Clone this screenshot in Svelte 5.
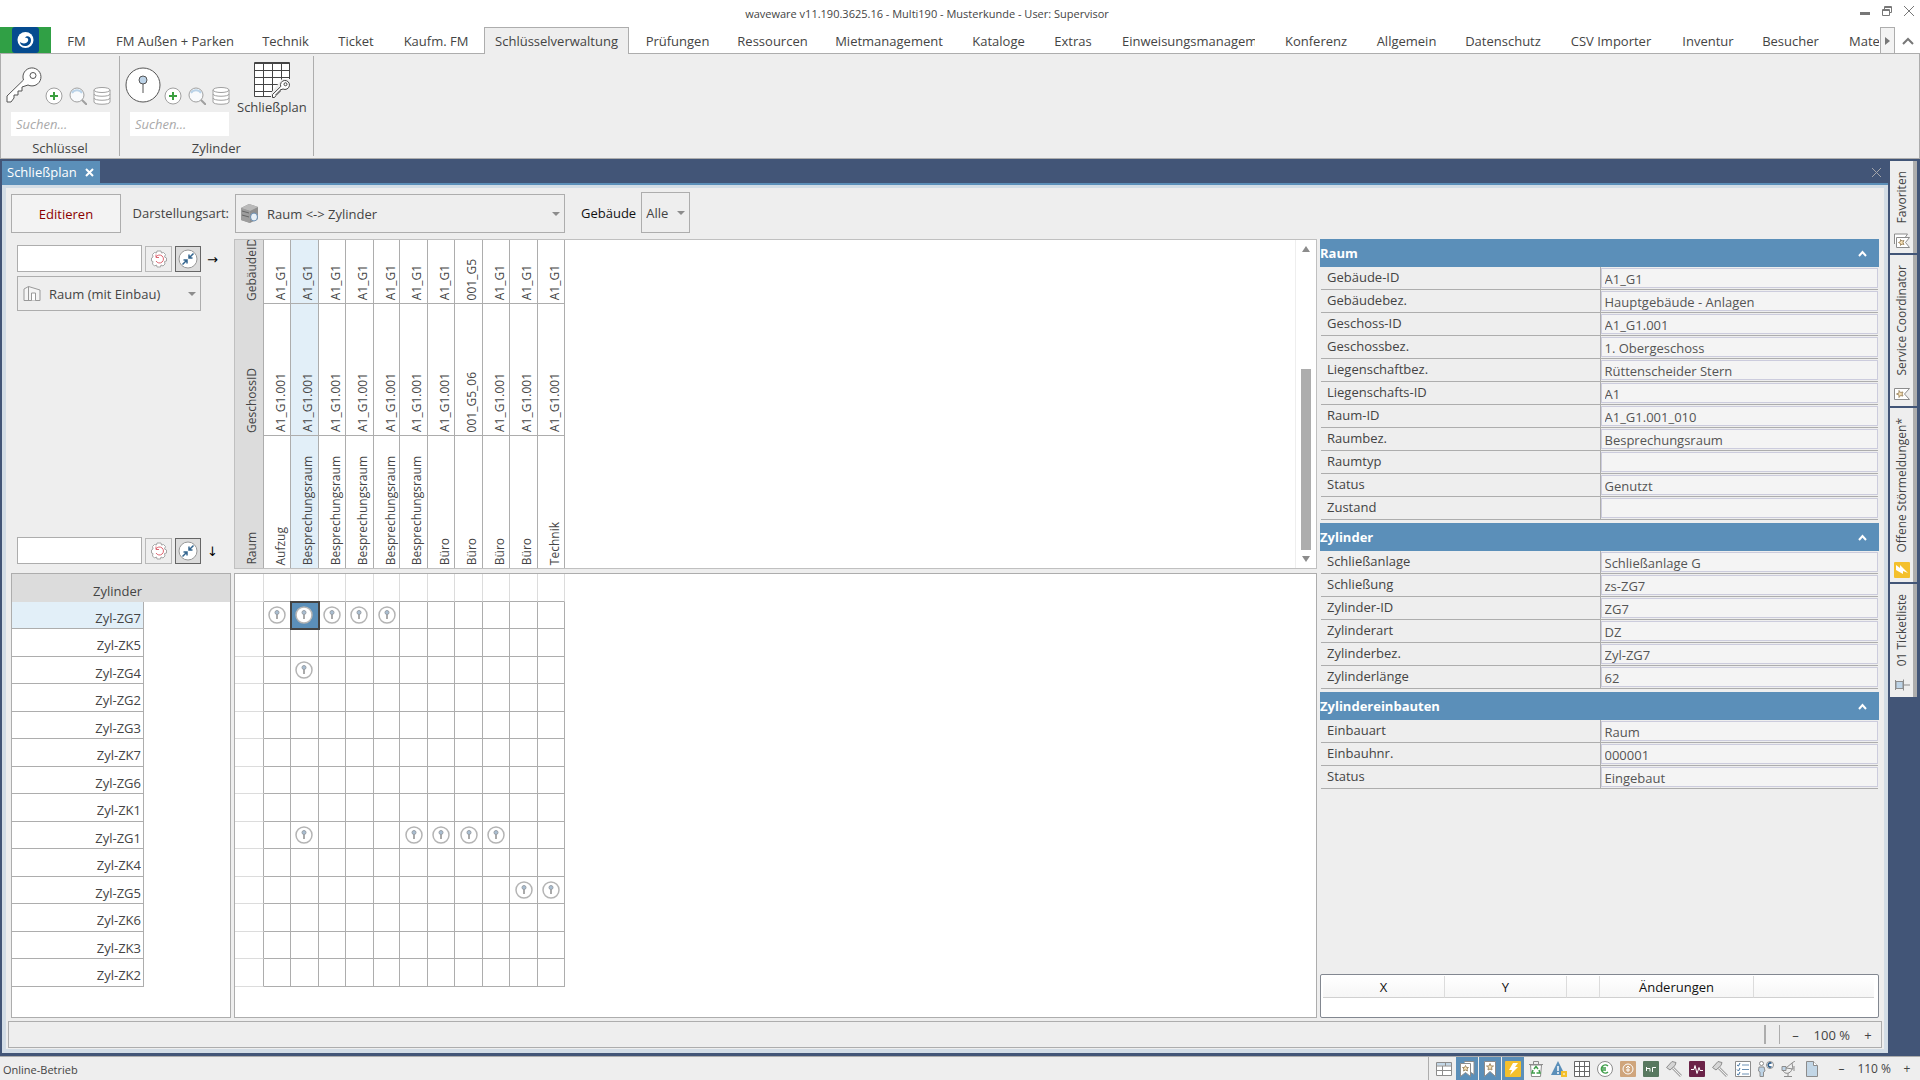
<script>
  let tabs = ["FM", "FM Außen + Parken", "Technik", "Ticket", "Kaufm. FM", "Schlüsselverwaltung", "Prüfungen", "Ressourcen", "Mietmanagement", "Kataloge", "Extras", "Einweisungsmanagement", "Konferenz", "Allgemein", "Datenschutz", "CSV Importer", "Inventur", "Besucher", "Material"];
  let activeTab = "Schlüsselverwaltung";

  let rooms = [
    { building: "A1_G1", floor: "A1_G1.001", name: "Aufzug" },
    { building: "A1_G1", floor: "A1_G1.001", name: "Besprechungsraum" },
    { building: "A1_G1", floor: "A1_G1.001", name: "Besprechungsraum" },
    { building: "A1_G1", floor: "A1_G1.001", name: "Besprechungsraum" },
    { building: "A1_G1", floor: "A1_G1.001", name: "Besprechungsraum" },
    { building: "A1_G1", floor: "A1_G1.001", name: "Besprechungsraum" },
    { building: "A1_G1", floor: "A1_G1.001", name: "Büro" },
    { building: "001_G5", floor: "001_G5_06", name: "Büro" },
    { building: "A1_G1", floor: "A1_G1.001", name: "Büro" },
    { building: "A1_G1", floor: "A1_G1.001", name: "Büro" },
    { building: "A1_G1", floor: "A1_G1.001", name: "Technik" },
  ];
  let headerRows = [
    { key: "building", label: "GebäudeID" },
    { key: "floor", label: "GeschossID" },
    { key: "name", label: "Raum" },
  ];

  let cylinders = [
    { name: "Zyl-ZG7", rooms: [0, 1, 2, 3, 4] },
    { name: "Zyl-ZK5", rooms: [] },
    { name: "Zyl-ZG4", rooms: [1] },
    { name: "Zyl-ZG2", rooms: [] },
    { name: "Zyl-ZG3", rooms: [] },
    { name: "Zyl-ZK7", rooms: [] },
    { name: "Zyl-ZG6", rooms: [] },
    { name: "Zyl-ZK1", rooms: [] },
    { name: "Zyl-ZG1", rooms: [1, 5, 6, 7, 8] },
    { name: "Zyl-ZK4", rooms: [] },
    { name: "Zyl-ZG5", rooms: [9, 10] },
    { name: "Zyl-ZK6", rooms: [] },
    { name: "Zyl-ZK3", rooms: [] },
    { name: "Zyl-ZK2", rooms: [] },
  ];
  let selectedRow = 0;
  let selectedCol = 1;

  function select(row, col) {
    selectedRow = row;
    selectedCol = col;
  }

  let sections = [
    {
      title: "Raum",
      open: true,
      fields: [
        ["Gebäude-ID", "A1_G1"],
        ["Gebäudebez.", "Hauptgebäude - Anlagen"],
        ["Geschoss-ID", "A1_G1.001"],
        ["Geschossbez.", "1. Obergeschoss"],
        ["Liegenschaftbez.", "Rüttenscheider Stern"],
        ["Liegenschafts-ID", "A1"],
        ["Raum-ID", "A1_G1.001_010"],
        ["Raumbez.", "Besprechungsraum"],
        ["Raumtyp", ""],
        ["Status", "Genutzt"],
        ["Zustand", ""],
      ],
    },
    {
      title: "Zylinder",
      open: true,
      fields: [
        ["Schließanlage", "Schließanlage G"],
        ["Schließung", "zs-ZG7"],
        ["Zylinder-ID", "ZG7"],
        ["Zylinderart", "DZ"],
        ["Zylinderbez.", "Zyl-ZG7"],
        ["Zylinderlänge", "62"],
      ],
    },
    {
      title: "Zylindereinbauten",
      open: true,
      fields: [
        ["Einbauart", "Raum"],
        ["Einbauhnr.", "000001"],
        ["Status", "Eingebaut"],
      ],
    },
  ];

  let sideTabs = [
    { label: "Favoriten", icon: "bookmarks" },
    { label: "Service Coordinator", icon: "bookmark" },
    { label: "Offene Störmeldungen*", icon: "flash" },
    { label: "01 Ticketliste", icon: "pin" },
  ];
  let tools = ["table", "bookmarks", "bookmark", "flash", "trash", "warning", "grid", "euro", "tan", "green", "hammer", "pulse", "hammer", "checklist", "person", "dish", "page"];
  let activeTools = [1, 2, 3];
</script>

{#snippet keyShape()}
  <path d="M17.500 13 1 29v6h4l3-4v-3h4v-4h4v-4l6-2a9 9 0 1 0-4.500-5z" />
  <circle cx="27" cy="8.500" r="3" />
{/snippet}

{#snippet lockShape()}
  <circle cx="18" cy="18" r="17" fill="#fff" />
  <path d="M18 16v10" />
  <circle cx="18" cy="13" r="4" fill="#bcd3e8" />
{/snippet}

{#snippet smallIcons(label)}
  <button class="plain" aria-label="{label} anlegen">
    <svg width="18" height="18" viewBox="0 0 18 18" fill="#fff" stroke="#a0a0a0"><circle cx="9" cy="9" r="8" /><path d="M9 5v8M5 9h8" stroke="#3a9f3f" stroke-width="2" /></svg>
  </button>
  <button class="plain" aria-label="{label} suchen">
    <svg width="18" height="18" viewBox="0 0 18 18" fill="#f8fafc" stroke="#a0a0a0"><circle cx="8" cy="8" r="7" /><path d="M3 6a6 6 0 0 1 10 0" stroke="#b9d2e8" stroke-width="2" /><path d="m13 13 5 5" stroke-width="2" /></svg>
  </button>
  <button class="plain" aria-label="{label} Liste">
    <svg width="18" height="18" viewBox="0 0 18 18" fill="#fff" stroke="#a0a0a0"><path d="M1 3v12c0 3 16 3 16 0V3" /><path d="M1 7c0 3 16 3 16 0M1 11c0 3 16 3 16 0" fill="none" /><ellipse cx="9" cy="3" rx="8" ry="2.500" /></svg>
  </button>
{/snippet}

{#snippet icon(name)}
  <svg width="16" height="16" viewBox="0 0 16 16" fill="none" stroke="#8c8c8c">
    {#if name == "table"}
      <path d="M.5 1.500h15v13H.5z" fill="#fff" /><path d="M1 2h14v2.500H1z" fill="#c2d6e6" stroke="none" /><path d="M.5 5h15M.5 9.500h15M9.500 1.500V5M6.500 5v9.500" />
    {:else if name == "bookmarks"}
      <path d="M5 .5h10v13l-3-2" fill="#fff" /><path d="M1.500 2.500h10v13l-5-4-5 4z" fill="#fff" /><path d="m6.500 4.500 1 2h2l-1.500 1.500.5 2-2-1-2 1 .5-2L3.500 6.500h2z" fill="#f6dfb2" stroke="#a58f6a" />
    {:else if name == "bookmark"}
      <path d="M2.500.5h11v15L8 10.500l-5.500 5z" fill="#fff" /><path d="m8 2.500 1 2.500h2.500l-2 1.500.5 2.500-2-1-2 1 .5-2.500L4.500 5H7z" fill="#f6dfb2" stroke="#a58f6a" />
    {:else if name == "flash"}
      <rect width="16" height="16" rx="1" fill="#f4c02c" stroke="none" /><path d="M8 2h5l-3 4h3l-8 8 2-5H4z" fill="#fff" stroke="none" />
    {:else if name == "pin"}
      <path d="M3 1.500h10M4.500 2h7v7h-7zM2.500 9.500h11" fill="#bdd3e6" /><path d="M8 10v6" />
    {:else if name == "trash"}
      <path d="M2.500 4h11l-1 11.500h-9z" fill="#fff" /><path d="M1 3.500h14M5.500 3V.500h5V3" /><path d="m6 8 2-2.500L10 8M5 9l-1 3h3M11 9l1 3H8.500" stroke="#3f9e4a" stroke-width="1.500" />
    {:else if name == "warning"}
      <path d="M7 0 14 14H0z" fill="#5b8fb9" stroke="none" /><path d="M7 5v5M7 11v2" stroke="#fff" stroke-width="1.500" /><path d="M10 10h6v6h-6z" fill="#f4c02c" stroke="none" /><path d="M12 13h2" stroke="#fff" />
    {:else if name == "grid"}
      <path d="M.5.5h15v15H.5z" fill="#fff" stroke="#666" /><path d="M5.500 0v16M10.500 0v16M0 5.500h16M0 10.500h16" stroke="#666" />
    {:else if name == "euro"}
      <circle cx="8" cy="8" r="7.500" fill="#fff" /><path d="M11 5a4 4 0 1 0 0 6M4 7h5M4 9h5" stroke="#3f9e4a" stroke-width="1.500" />
    {:else if name == "tan"}
      <rect width="16" height="16" rx="1" fill="#cfa57c" stroke="none" /><circle cx="8" cy="8" r="5" stroke="#fff" /><path d="M8 5v6M6 7l2-2 2 2M6 9h4" stroke="#fff" />
    {:else if name == "green"}
      <rect width="16" height="16" rx="1" fill="#58785f" stroke="none" /><path d="M3.500 6v4M3 7.500h4v3M9.500 11V6.500H13" stroke="#fff" />
    {:else if name == "hammer"}
      <path d="m7 7 8 8" stroke="#aaa" stroke-width="3" /><path d="m7 7 8 8" stroke="#eee" /><path d="M.5 6.500 6 .5l4 1-1 3-5 4.500z" fill="#d5d5d5" />
    {:else if name == "pulse"}
      <rect width="16" height="16" rx="1" fill="#6b2348" stroke="none" /><path d="M2 8.500h3l1-4 2 8 2-6 1 3h3" stroke="#fff" />
    {:else if name == "checklist"}
      <path d="M.5.5h15v15H.5z" fill="#fff" /><path d="m2 4 1.500 1L5 2M2 8.500 3.500 10 5 7M2 13l1.500 1L5 11" stroke="#3d6f9e" /><path d="M7 4h7M7 8.500h7M7 13h7" stroke="#6c91b5" />
    {:else if name == "person"}
      <circle cx="3.500" cy="2.500" r="2" fill="#fff" /><path d="M1 6h5l1 4-1.500 1v4.500H2V11L.5 10z" fill="#bdd3e6" /><circle cx="12" cy="4" r="3.500" fill="#fff" /><path d="M13.500 2.500a2 2 0 1 0 0 3" stroke="#2f5d8a" stroke-width="1.500" />
    {:else if name == "dish"}
      <path d="M1 5.500h4v4H1z" fill="#bdd3e6" /><path d="M2 9c1 5 8 4 9-1M5 7l6-5 1 6zM11 2l3-2M13 5v5M7 12v3.500M3 15.500h8" />
    {:else if name == "page"}
      <path d="M2.500.5h7l4 4v11h-11z" fill="#c2d6e6" /><path d="M9.500.5v4h4" fill="#fff" />
    {/if}
  </svg>
{/snippet}

{#snippet filterRow(label, arrow)}
  <div class="filter">
    <input type="text" aria-label={label} />
    <button class="reset" aria-label="{label} zurücksetzen">
      <svg width="16" height="18" viewBox="0 0 16 18" fill="#fff" stroke="#a5a5a5"><path d="M6 1h4l.5 2 2-.5 2 2-1 2.500 2 1v3l-2 .5.500 2.500-2 2-2-1-.5 2H6l-.5-2-2 1-2-2 .5-2.500L.5 11V8l1.500-1-.5-2.500 2-2 2 .5z" /><path d="M5 7a4 4 0 1 1 0 4M5 4.500V7.500h3" fill="none" stroke="#dd6671" /></svg>
    </button>
    <button class="compress" aria-label="{label} anpassen">
      <svg width="20" height="20" viewBox="0 0 20 20" fill="#fff" stroke="#999"><circle cx="10" cy="10" r="9" /><path d="m15.500 4.500-4 4M11 5.500V9h3.500M4.500 15.500l4-4M5.500 11H9v3.500" fill="none" stroke="#33658f" stroke-width="1.500" /></svg>
    </button>
    <span class="arrow">{arrow}</span>
  </div>
{/snippet}

<div class="app">
  <header class="titlebar">
    <h1>waveware v11.190.3625.16 - Multi190 - Musterkunde - User: Supervisor</h1>
    <button class="plain" aria-label="Minimieren"><svg width="10" height="10" viewBox="0 0 10 10"><path d="M0 6h10v3H0z" fill="#777" /></svg></button>
    <button class="plain" aria-label="Wiederherstellen"><svg width="10" height="10" viewBox="0 0 10 10" fill="none" stroke="#777"><path d="M.5 3.500h7v6h-7zM.5 4.500h7M2.500 3V.500h7v6H8M2.500 1.500h7" /></svg></button>
    <button class="plain" aria-label="Schließen"><svg width="10" height="10" viewBox="0 0 10 10" stroke="#777"><path d="m0 0 10 10M10 0 0 10" /></svg></button>
  </header>

  <nav class="menu">
    <button class="logo" aria-label="waveware">
      <svg width="27" height="26" viewBox="0 0 27 26"><rect width="27" height="26" rx="3" fill="#054b8f" /><ellipse cx="13.500" cy="13" rx="8" ry="8" fill="#fff" /><path d="M8 15c2 2 7 2 8-1 1-2-1-4-3-3 1-3 6-2 6 2s-3 6-6 6-5-2-5-4z" fill="#054b8f" /></svg>
    </button>
    <div class="tabs">
      {#each tabs as tab}
        <button class:active={tab == activeTab} on:click={() => (activeTab = tab)}><span>{tab}</span></button>
      {/each}
    </div>
    <button class="scroll" aria-label="Weiter"><svg width="5" height="8" viewBox="0 0 5 8"><path d="m0 0 5 4-5 4z" fill="#777" /></svg></button>
    <button class="plain collapse" aria-label="Menüband reduzieren"><svg width="12" height="8" viewBox="0 0 12 8" fill="none" stroke="#777" stroke-width="2"><path d="m1 7 5-5 5 5" /></svg></button>
  </nav>

  <section class="ribbon">
    <div class="group">
      <div class="group-body">
        <div class="entity">
          <div class="entity-icons">
            <button class="plain big" aria-label="Schlüssel"><svg width="36" height="36" viewBox="0 0 36 36" fill="#fff" stroke="#555">{@render keyShape()}</svg></button>
            {@render smallIcons("Schlüssel")}
          </div>
          <input type="text" placeholder="Suchen..." aria-label="Schlüssel suchen" />
        </div>
      </div>
      <div class="group-label">Schlüssel</div>
    </div>
    <div class="group">
      <div class="group-body">
        <div class="entity">
          <div class="entity-icons">
            <button class="plain big" aria-label="Zylinder"><svg width="36" height="36" viewBox="0 0 36 36" fill="none" stroke="#555">{@render lockShape()}</svg></button>
            {@render smallIcons("Zylinder")}
          </div>
          <input type="text" placeholder="Suchen..." aria-label="Zylinder suchen" />
        </div>
        <button class="plain plan">
          <svg width="36" height="36" viewBox="0 0 36 36" fill="#fff" stroke="#444"><path d="M.5.5h35v34H.5z" /><path d="M0 1.500h36M9.500 0v35M18.500 0v35M27.500 0v35M0 8.500h36M0 15.500h36M0 22.500h36M0 29.500h36" /><path d="M17 36V31L28 17h8v19z" fill="#eee" stroke="none" /><g transform="translate(18 18) scale(.5)" stroke-width="2">{@render keyShape()}</g></svg>
          <span>Schließplan</span>
        </button>
      </div>
      <div class="group-label">Zylinder</div>
    </div>
  </section>

  <div class="dock">
    <div class="document">
      <div class="doc-tabs">
        <div class="doc-tab">
          <span>Schließplan</span>
          <button class="plain" aria-label="Schließplan schließen"><svg width="9" height="9" viewBox="0 0 9 9" stroke="#fff" stroke-width="2"><path d="m1 1 7 7M8 1 1 8" /></svg></button>
        </div>
        <button class="plain" aria-label="Alle schließen"><svg width="9" height="9" viewBox="0 0 9 9" stroke="#a3a5aa"><path d="m0 0 9 9M9 0 0 9" /></svg></button>
      </div>

      <main>
        <div class="toolbar">
          <div class="toolbar-left">
            <button class="edit">Editieren</button>
            <label for="view">Darstellungsart:</label>
          </div>
          <div class="combo view">
            <svg width="18" height="19" viewBox="0 0 18 19"><path d="m0 4 8-4 9 3v12l-8 4-9-3z" fill="#8f8f8f" /><path d="m0 4 9 3 8-4-9-3z" fill="#b9b9b9" /><path d="M9 7v12l-9-3V4z" fill="#9d9d9d" /><path d="M1 7l7 2M1 11l7 2" stroke="#666" /><ellipse cx="13" cy="13" rx="3.500" ry="4" fill="#e8f0f7" stroke="#6b8fb3" /></svg>
            <select id="view"><option>Raum &lt;-&gt; Zylinder</option></select>
          </div>
          <label class="black" for="building">Gebäude</label>
          <div class="combo building">
            <select id="building"><option>Alle</option></select>
          </div>
        </div>

        <div class="workspace">
          <div class="filters">
            {@render filterRow("Spaltenfilter", "→")}
            <div class="combo">
              <svg width="18" height="15" viewBox="0 0 18 15" fill="#f5f5f5" stroke="#999"><path d="M1 3 5.500.5 17 4v10.500H1z" /><path d="M5.500.5v14" /><path d="M8.500 14.500V7h4v7.500" fill="#fff" /></svg>
              <select aria-label="Raum"><option>Raum (mit Einbau)</option></select>
            </div>
            {@render filterRow("Zeilenfilter", "↓")}
          </div>

          <div class="frame rooms">
            <div class="rooms-body">
              <table>
                <tbody>
                  {#each headerRows as row}
                    <tr>
                      <th scope="row"><span>{row.label}</span></th>
                      {#each rooms as room, col}
                        <td class:marked={col == selectedCol}><span>{room[row.key]}</span></td>
                      {/each}
                    </tr>
                  {/each}
                </tbody>
              </table>
            </div>
            <div class="scrollbar">
              <svg width="8" height="6" viewBox="0 0 8 6"><path d="M0 6 4 0l4 6z" fill="#8c8c8c" /></svg>
              <div class="track"><div class="thumb"></div></div>
              <svg width="8" height="6" viewBox="0 0 8 6"><path d="m0 0 4 6 4-6z" fill="#8c8c8c" /></svg>
            </div>
          </div>

          <div class="frame list">
            <table>
              <thead><tr><th scope="col">Zylinder</th><th></th></tr></thead>
              <tbody>
                {#each cylinders as cylinder, row}
                  <tr><td class:marked={row == selectedRow}>{cylinder.name}</td></tr>
                {/each}
              </tbody>
            </table>
          </div>

          <div class="frame matrix">
            <table>
              <thead>
                <tr><th></th>{#each rooms as room}<th></th>{/each}</tr>
              </thead>
              <tbody>
                {#each cylinders as cylinder, row}
                  <tr>
                    <th></th>
                    {#each rooms as room, col}
                      <td class:selected={row == selectedRow && col == selectedCol} on:click={() => select(row, col)}>
                        {#if cylinder.rooms.includes(col)}
                          <svg width="18" height="18" viewBox="0 0 18 18" stroke="#b4b4b4"><circle cx="9" cy="9" r="8" fill="#fff" stroke-width="1.500" /><path d="M9 8v5" stroke="#8e8e8e" stroke-width="1.500" /><circle cx="9" cy="6.500" r="2" fill="#a9bfd3" stroke="#999fa6" /></svg>
                        {/if}
                      </td>
                    {/each}
                  </tr>
                {/each}
              </tbody>
            </table>
          </div>

          <aside class="properties">
            {#each sections as section, s}
              <section>
                <button class="section-title" on:click={() => (section.open = !section.open)}>
                  <span>{section.title}</span>
                  <svg width="9" height="7" viewBox="0 0 9 7" fill="none" stroke="#fff" stroke-width="2"><path d="m1 6 3.500-4L8 6" /></svg>
                </button>
                {#if section.open}
                  {#each section.fields as [label, value], f}
                    <div class="field">
                      <label for="f{s}-{f}">{label}</label>
                      <div class="value"><input id="f{s}-{f}" type="text" readonly {value} /></div>
                    </div>
                  {/each}
                {/if}
              </section>
            {/each}
            <div class="changes">
              <table>
                <thead>
                  <tr><th>X</th><th>Y</th><th></th><th>Änderungen</th><th></th></tr>
                </thead>
              </table>
            </div>
          </aside>
        </div>

        <div class="zoombar">
          <span class="grip"></span>
          <div class="zoom">
            <button class="plain" aria-label="Verkleinern">–</button>
            <span>100 %</span>
            <button class="plain" aria-label="Vergrößern">+</button>
          </div>
        </div>
      </main>
    </div>

    <div class="side">
      {#each sideTabs as tab}
        <button><span>{tab.label}</span><span class="side-icon">{@render icon(tab.icon)}</span></button>
      {/each}
    </div>
  </div>

  <footer class="status">
    <span class="mode">Online-Betrieb</span>
    <div class="tools">
      {#each tools as tool, i}
        <button class="plain" class:on={activeTools.includes(i)} aria-label={tool}>{@render icon(tool)}</button>
      {/each}
    </div>
    <div class="zoom">
      <button class="plain" aria-label="Verkleinern">–</button>
      <span>110 %</span>
      <button class="plain" aria-label="Vergrößern">+</button>
    </div>
  </footer>
</div>

<style>
  .app {
    display: flex;
    flex-direction: column;
    min-height: 100vh;
    background: #eee;
    color: #444;
    font-family: "Open Sans", "Noto Sans", sans-serif;
    font-size: 13px;
    line-height: 18px;
  }
  .app * {
    box-sizing: border-box;
  }
  button, input, select {
    font: inherit;
    color: inherit;
    border-radius: 0;
  }
  button {
    padding: 0;
    cursor: pointer;
  }
  svg {
    display: block;
    flex: none;
  }
  .plain {
    display: flex;
    align-items: center;
    justify-content: center;
    border: 0;
    background: none;
  }

  .titlebar {
    display: flex;
    align-items: center;
    height: 27px;
    background: #fff;
  }
  h1 {
    flex: 1;
    margin: 0;
    font-size: 11px;
    font-weight: 400;
    text-align: center;
  }
  .titlebar .plain {
    width: 22px;
    height: 20px;
    margin-bottom: 6px;
  }

  .menu {
    display: flex;
    height: 27px;
    background: #fff;
    box-shadow: inset 0 -1px #adadad;
  }
  .logo {
    display: flex;
    justify-content: center;
    width: 51px;
    height: 26px;
    border: 0;
    background: #30a045;
  }
  .tabs {
    flex: 1;
    display: grid;
    grid-template-columns: 51px 146px 75px 66px 94px 148px 93px 97px 136px 83px 66px 165px 90px 91px 102px 114px 80px 85px 47px;
    overflow: hidden;
  }
  .tabs button {
    display: flex;
    justify-content: center;
    min-width: 0;
    padding: 4px 15px 0;
    border: 1px solid transparent;
    border-bottom: 0;
    background: none;
    white-space: nowrap;
  }
  .tabs button.active {
    margin: 0 2px 0 1px;
    border-color: #adadad;
    background: #eee;
  }
  .tabs button:nth-child(12), .tabs button:last-child {
    justify-content: flex-start;
  }
  .tabs button:last-child {
    padding-right: 0;
  }
  .tabs button:nth-child(12) span, .tabs button:last-child span {
    overflow: hidden;
  }
  .scroll {
    display: flex;
    align-items: center;
    justify-content: center;
    width: 15px;
    border: 1px solid #adadad;
    background: #f3f3f3;
  }
  .collapse {
    width: 25px;
  }

  .ribbon {
    display: flex;
    height: 105px;
    padding: 2px 0;
    border: 1px solid #adadad;
    border-top: 0;
  }
  .group {
    display: flex;
    flex-direction: column;
    border-right: 1px solid #adadad;
  }
  .group-body {
    display: flex;
    flex: 1;
    padding: 0 8px 0 5px;
  }
  .entity-icons {
    display: flex;
    align-items: flex-end;
    gap: 6px;
    margin-top: 11px;
  }
  .big {
    margin: 0 -3px 2px 0;
  }
  .entity input {
    width: 99px;
    height: 24px;
    margin: 7px 0 0 5px;
    padding: 0 5px;
    border: 0;
    background: #fff;
  }
  .entity input::placeholder {
    color: #aaa;
    font-style: italic;
    opacity: 1;
  }
  .plan {
    flex-direction: column;
    justify-content: flex-start;
    margin: 0 -2px 0 7px;
    padding-top: 6px;
  }
  .group-label {
    height: 17px;
    text-align: center;
  }

  .dock {
    flex: 1;
    display: flex;
    padding: 0 3px 3px 2px;
    background: #425577;
  }
  .document {
    flex: 1;
    display: flex;
    flex-direction: column;
    min-width: 0;
  }
  .doc-tabs {
    display: flex;
    justify-content: space-between;
    height: 26px;
    padding: 2px 7px 0 0;
    border-bottom: 2px solid #5b8fb9;
  }
  .doc-tab {
    display: flex;
    align-items: center;
    gap: 8px;
    padding: 0 6px 0 5px;
    background: #5b8fb9;
    color: #fff;
  }
  main {
    flex: 1;
    display: flex;
    flex-direction: column;
    border: 4px solid #d3dde6;
    border-top-width: 3px;
    background: #eee;
  }

  .toolbar {
    display: flex;
    align-items: center;
    gap: 16px;
    height: 51px;
  }
  .toolbar label {
    padding-bottom: 2px;
  }
  .toolbar-left {
    display: flex;
    align-items: center;
    justify-content: space-between;
    width: 229px;
    margin-right: -16px;
    padding: 0 6px 0 5px;
  }
  .edit {
    width: 110px;
    height: 39px;
    border: 1px solid #adadad;
    background: #f3f3f3;
    color: #8b0000;
  }
  .black {
    color: #111;
  }
  .combo {
    position: relative;
    display: flex;
    align-items: center;
    gap: 8px;
    height: 35px;
    padding-left: 5px;
    border: 1px solid #adadad;
  }
  .combo::after {
    content: "";
    position: absolute;
    right: 4px;
    top: 50%;
    margin-top: -2px;
    border: 4px solid transparent;
    border-top-color: #8c8c8c;
    border-bottom: 0;
    pointer-events: none;
  }
  .combo select {
    flex: 1;
    align-self: stretch;
    min-width: 0;
    padding: 0;
    border: 0;
    background: none;
    appearance: none;
  }
  .combo.view {
    width: 330px;
    height: 39px;
  }
  .combo.building {
    width: 49px;
    height: 41px;
    margin: 0 0 2px -11px;
    padding-left: 4px;
  }

  .workspace {
    flex: 1;
    display: grid;
    grid-template-columns: 225px 1fr 559px;
    grid-template-rows: 330px 1fr;
    gap: 4px 3px;
    padding-right: 5px;
  }
  .filters {
    display: flex;
    flex-direction: column;
    gap: 4px;
    padding: 6px 0 5px 11px;
  }
  .filters .combo {
    width: 184px;
  }
  .filters .filter:last-child {
    margin-top: auto;
  }
  .filter {
    display: flex;
    align-items: center;
    gap: 3px;
    height: 27px;
  }
  .filter input {
    width: 125px;
    height: 27px;
    padding: 0 4px;
    border: 1px solid #adadad;
    background: #fff;
  }
  .filter button {
    display: flex;
    align-items: center;
    justify-content: center;
    width: 27px;
    height: 26px;
    border: 1px solid #b9b9b9;
    background: #eee;
  }
  .filter .compress {
    width: 26px;
    border-color: #666;
    background: #dcdcdc;
  }
  .arrow {
    margin: 2px 0 0 3px;
    color: #000;
    font-family: "DejaVu Sans", sans-serif;
  }

  .frame {
    border: 1px solid #adadad;
    background: #fff;
  }
  .frame table {
    border-spacing: 0;
    table-layout: fixed;
  }
  .frame th, .frame td {
    padding: 0;
    border: 0 solid #adadad;
    border-width: 0 1px 1px 0;
    font-weight: 400;
  }
  .frame tbody tr {
    height: 27px;
  }
  .frame tbody tr:nth-child(even) {
    height: 28px;
  }
  .frame .marked {
    background: #e2eff8;
  }

  .rooms {
    display: flex;
    overflow: hidden;
    border-color: #c0c0c0;
    font-size: 12px;
  }
  .rooms-body {
    flex: 1;
    display: flex;
    flex-direction: column;
    justify-content: flex-end;
    height: 328px;
    overflow: hidden;
  }
  .rooms table, .matrix table {
    width: 330px;
  }
  .rooms th:first-child, .matrix th:first-child {
    width: 29px;
  }
  .rooms td:nth-child(odd), .matrix thead th:nth-child(odd):not(:first-child) {
    width: 28px;
  }
  .rooms tbody tr, .rooms tbody tr:nth-child(even) {
    height: 132px;
  }
  .rooms th, .rooms td {
    vertical-align: bottom;
  }
  .rooms th {
    border-bottom: 0;
    background: #dcdcdc;
  }
  .rooms tr:last-child td {
    border-bottom: 0;
  }
  .rooms span {
    display: block;
    width: 18px;
    margin: 0 0 3px 8px;
    writing-mode: vertical-rl;
    transform: rotate(180deg);
    white-space: nowrap;
  }
  .scrollbar {
    display: flex;
    flex-direction: column;
    align-items: center;
    width: 21px;
    padding: 6px 0;
    border-left: 1px solid #eee;
  }
  .track {
    flex: 1;
    display: flex;
    align-items: flex-end;
    padding: 4px 0 6px;
  }
  .thumb {
    width: 10px;
    height: 181px;
    background: #adadad;
  }

  .list {
    margin-left: 5px;
  }
  .list table {
    width: 100%;
  }
  .list thead tr, .matrix thead tr {
    height: 28px;
  }
  .list th {
    border: 0;
    background: #dcdcdc;
  }
  .list th:first-child {
    width: 132px;
  }
  .list th, .list td {
    padding: 5px 2px 0 0;
    line-height: 16px;
    text-align: right;
  }
  .matrix thead th, .matrix tbody th {
    border-color: #dcdcdc;
  }
  .matrix thead th {
    border-bottom-color: #adadad;
  }
  .matrix thead th:first-child {
    border-bottom-color: #dcdcdc;
  }
  .matrix tbody th {
    border-right-color: #adadad;
  }
  .matrix td svg {
    margin: 0 auto;
  }
  .matrix td.selected {
    outline: 2px solid #444;
    outline-offset: -1px;
    background: #5b8fb9;
  }

  .properties {
    grid-column: 3;
    grid-row: 1 / 3;
    display: flex;
    flex-direction: column;
    gap: 3px;
  }
  .section-title {
    display: flex;
    align-items: center;
    justify-content: space-between;
    width: 100%;
    height: 28px;
    padding: 0 12px 0 0;
    border: 0;
    background: #5b8fb9;
    color: #fff;
    font-weight: 700;
  }
  .field {
    display: grid;
    grid-template-columns: 1fr 1fr;
    height: 23px;
    margin: 0 1px;
    border-bottom: 1px solid #adadad;
  }
  .field label {
    padding: 1px 6px 0;
  }
  .value {
    padding: 1px 0;
    border-left: 1px solid #adadad;
  }
  .field input {
    display: block;
    width: 100%;
    height: 20px;
    padding: 2px 3px 0;
    border: 1px solid #ccd;
    background: #f4f4f4;
    color: #555;
  }
  .changes {
    height: 44px;
    margin-top: auto;
    padding: 1px 4px 0 2px;
    border: 1px solid #828790;
    border-radius: 2px;
    background: #fff;
  }
  .changes table {
    width: 100%;
    border-spacing: 0;
    table-layout: fixed;
  }
  .changes th {
    width: 122px;
    height: 22px;
    padding: 0;
    border-right: 1px solid #dcdcdc;
    border-bottom: 1px solid #d0d0d0;
    background: linear-gradient(#fff, #f6f6f6);
    color: #111;
    font-weight: 400;
  }
  .changes th:nth-child(3) {
    width: 33px;
  }
  .changes th:nth-child(4) {
    width: 154px;
  }
  .changes th:last-child {
    width: auto;
    border-right: 0;
  }

  .zoombar {
    display: flex;
    justify-content: flex-end;
    height: 27px;
    margin: 3px 2px 1px;
    padding: 3px 0;
    border: 1px solid #adadad;
  }
  .grip {
    width: 16px;
    border: solid #adadad;
    border-width: 0 1px 0 2px;
  }
  .zoom {
    display: flex;
    align-items: center;
    padding-left: 3px;
  }
  .zoom .plain {
    width: 26px;
    height: 18px;
  }
  .zoom span {
    padding: 0 5px;
  }

  .side {
    display: flex;
    flex-direction: column;
    gap: 2px;
    width: 29px;
    padding: 2px 0 0 2px;
    font-size: 12px;
  }
  .side button {
    display: flex;
    flex-direction: column;
    align-items: center;
    gap: 10px;
    padding: 10px 0 4px;
    border: 0;
    border-right: 4px solid #adadad;
    background: #eee;
  }
  .side span {
    writing-mode: vertical-rl;
    transform: rotate(180deg);
    white-space: nowrap;
  }
  .side .side-icon {
    writing-mode: horizontal-tb;
    transform: rotate(-90deg);
  }

  .status {
    display: flex;
    align-items: center;
    height: 24px;
    border-top: 1px solid #adadad;
  }
  .mode {
    flex: 1;
    padding: 2px 3px 0;
    font-size: 11px;
  }
  .tools {
    display: flex;
    gap: 1px;
    padding-left: 4px;
    border-left: 1px solid #adadad;
  }
  .tools .plain {
    width: 22px;
    height: 23px;
  }
  .tools .on {
    background: #5b8fb9;
  }
  .status .zoom {
    padding-left: 5px;
    font-size: 12px;
  }
  .status .zoom span {
    padding: 0 3px;
  }
</style>
